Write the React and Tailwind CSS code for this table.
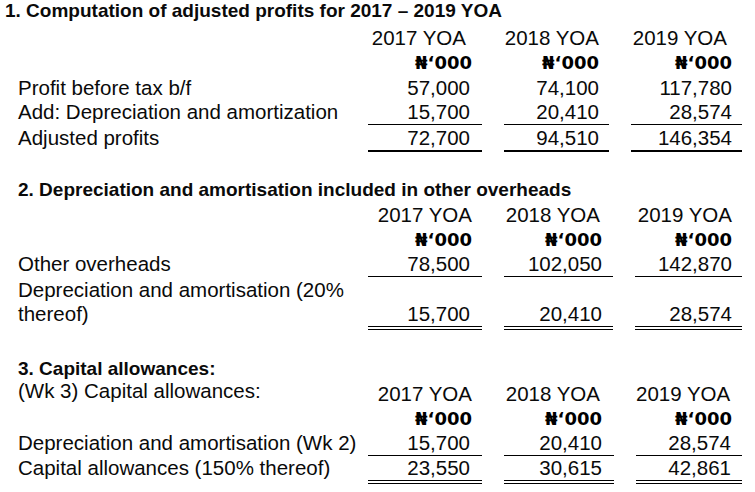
import React from "react";

const body = { fontFamily: '"Liberation Sans", Arial, sans-serif' };
const naira = { fontFamily: '"DejaVu Sans", "Liberation Sans", sans-serif' };

function Cell({ children, className = "" }) {
  return <div className={`text-right whitespace-nowrap ${className}`}>{children}</div>;
}

function Label({ children, className = "" }) {
  return <div className={`whitespace-nowrap ${className}`}>{children}</div>;
}

function N({ pr = "pr-[10px]" }) {
  return (
    <div className={`text-right h-[25px] leading-[25px] font-bold text-[18px] text-black ${pr}`} style={naira}>
      ₦‘000
    </div>
  );
}

export default function App() {
  return (
    <div className="w-[755px] h-[492px] bg-white text-[#0a0a0a] text-[20.5px] overflow-hidden" style={body}>
      {/* Section 1 */}
      <div className="h-[25px] leading-[22px] pl-[5px] font-bold text-[19px] whitespace-nowrap">
        1. Computation of adjusted profits for 2017 – 2019 YOA
      </div>
      <div className="grid grid-cols-[328px_114px_105px_111px] gap-x-[22px] pl-[18px]">
        <div className="h-[25px]" />
        <Cell className="h-[25px] leading-[25px] pr-[16px]">2017 YOA</Cell>
        <Cell className="h-[25px] leading-[25px] pr-[10px]">2018 YOA</Cell>
        <Cell className="h-[25px] leading-[25px] pr-[15px]">2019 YOA</Cell>

        <div />
        <N />
        <N />
        <N />

        <Label className="h-[25px] leading-[25px]">Profit before tax b/f</Label>
        <Cell className="h-[25px] leading-[25px] pr-[12px]">57,000</Cell>
        <Cell className="h-[25px] leading-[25px] pr-[10px]">74,100</Cell>
        <Cell className="h-[25px] leading-[25px] pr-[10px]">117,780</Cell>

        <Label className="h-[25px] leading-[24px]">Add: Depreciation and amortization</Label>
        <Cell className="h-[25px] leading-[24px] pr-[12px] border-b border-black">15,700</Cell>
        <Cell className="h-[25px] leading-[24px] pr-[10px] border-b border-black">20,410</Cell>
        <Cell className="h-[25px] leading-[24px] pr-[10px] border-b border-black">28,574</Cell>

        <Label className="h-[27px] leading-[25px]">Adjusted profits</Label>
        <Cell className="h-[27px] leading-[25px] pr-[12px] border-b-2 border-black">72,700</Cell>
        <Cell className="h-[27px] leading-[25px] pr-[10px] border-b-2 border-black">94,510</Cell>
        <Cell className="h-[27px] leading-[25px] pr-[10px] border-b-2 border-black">146,354</Cell>
      </div>

      {/* Section 2 */}
      <div className="mt-[25px] h-[25px] leading-[25px] pl-[18px] font-bold text-[19px] whitespace-nowrap">
        2. Depreciation and amortisation included in other overheads
      </div>
      <div className="grid grid-cols-[328px_114px_109px_107px] gap-x-[22px] pl-[18px]">
        <div className="h-[25px]" />
        <Cell className="h-[25px] leading-[25px] pr-[10px]">2017 YOA</Cell>
        <Cell className="h-[25px] leading-[25px] pr-[13px]">2018 YOA</Cell>
        <Cell className="h-[25px] leading-[25px] pr-[10px]">2019 YOA</Cell>

        <div />
        <N />
        <N pr="pr-[11px]" />
        <N />

        <Label className="h-[25px] leading-[24px]">Other overheads</Label>
        <Cell className="h-[25px] leading-[24px] pr-[12px] border-b border-black">78,500</Cell>
        <Cell className="h-[25px] leading-[24px] pr-[11px] border-b border-black">102,050</Cell>
        <Cell className="h-[25px] leading-[24px] pr-[10px] border-b border-black">142,870</Cell>

        <Label className="h-[25px] leading-[25px]">Depreciation and amortisation (20%</Label>
        <div />
        <div />
        <div />

        <Label className="h-[28px] leading-[24px]">thereof)</Label>
        <Cell className="h-[28px] leading-[24px] pr-[12px] border-b-4 border-double border-black">15,700</Cell>
        <Cell className="h-[28px] leading-[24px] pr-[11px] border-b-4 border-double border-black">20,410</Cell>
        <Cell className="h-[28px] leading-[24px] pr-[10px] border-b-4 border-double border-black">28,574</Cell>
      </div>

      {/* Section 3 */}
      <div className="mt-[26px] h-[25px] leading-[25px] pl-[18px] font-bold text-[19px] whitespace-nowrap">
        3. Capital allowances:
      </div>
      <div className="grid grid-cols-[328px_114px_110px_106px] gap-x-[22px] pl-[18px]">
        <Label className="h-[25px] leading-[20px]">(Wk 3) Capital allowances:</Label>
        <Cell className="h-[25px] leading-[25px] pr-[10px]">2017 YOA</Cell>
        <Cell className="h-[25px] leading-[25px] pr-[14px]">2018 YOA</Cell>
        <Cell className="h-[25px] leading-[25px] pr-[12px]">2019 YOA</Cell>

        <div />
        <N />
        <N pr="pr-[12px]" />
        <N />

        <Label className="h-[25px] leading-[24px]">Depreciation and amortisation (Wk 2)</Label>
        <Cell className="h-[25px] leading-[24px] pr-[12px] border-b border-black">15,700</Cell>
        <Cell className="h-[25px] leading-[24px] pr-[12px] border-b border-black">20,410</Cell>
        <Cell className="h-[25px] leading-[24px] pr-[11px] border-b border-black">28,574</Cell>

        <Label className="h-[28px] leading-[24px]">Capital allowances (150% thereof)</Label>
        <Cell className="h-[28px] leading-[24px] pr-[12px] border-b-4 border-double border-black">23,550</Cell>
        <Cell className="h-[28px] leading-[24px] pr-[12px] border-b-4 border-double border-black">30,615</Cell>
        <Cell className="h-[28px] leading-[24px] pr-[11px] border-b-4 border-double border-black">42,861</Cell>
      </div>
    </div>
  );
}
